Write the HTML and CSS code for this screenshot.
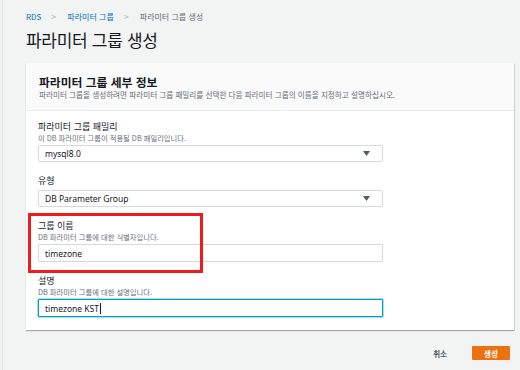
FILE: index.html
```html
<!DOCTYPE html>
<html lang="ko">
<head>
<meta charset="utf-8">
<link rel="stylesheet" href="styles.css">
</head>
<body>
<div class="page">
  <nav class="crumbs">
    <span class="crumb-link">RDS</span>
    <span class="sep">&gt;</span>
    <span class="crumb-link">파라미터 그룹</span>
    <span class="sep">&gt;</span>
    <span class="crumb-current">파라미터 그룹 생성</span>
  </nav>
  <h1 class="title">파라미터 그룹 생성</h1>

  <section class="card">
    <header class="card-head">
      <h2 class="card-title">파라미터 그룹 세부 정보</h2>
      <p class="card-sub">파라미터 그룹을 생성하려면 파라미터 그룹 패밀리를 선택한 다음 파라미터 그룹의 이름을 지정하고 설명하십시오.</p>
    </header>
    <div class="card-body">
      <div class="field">
        <div class="label">파라미터 그룹 패밀리</div>
        <div class="desc">이 DB 파라미터 그룹이 적용될 DB 패밀리입니다.</div>
        <div class="control select">
          <span>mysql8.0</span>
          <svg class="caret" width="7" height="5" viewBox="0 0 7 5"><path d="M0 0h7L3.5 5z" fill="#545b64"/></svg>
        </div>
      </div>
      <div class="field">
        <div class="label">유형</div>
        <div class="control select nodesc">
          <span>DB Parameter Group</span>
          <svg class="caret" width="7" height="5" viewBox="0 0 7 5"><path d="M0 0h7L3.5 5z" fill="#545b64"/></svg>
        </div>
      </div>
      <div class="field marked">
        <div class="label">그룹 이름</div>
        <div class="desc">DB 파라미터 그룹에 대한 식별자입니다.</div>
        <div class="control input">timezone</div>
        <div class="highlight"></div>
      </div>
      <div class="field">
        <div class="label">설명</div>
        <div class="desc">DB 파라미터 그룹에 대한 설명입니다.</div>
        <div class="control input focus">timezone KST<span class="cursor"></span></div>
      </div>
    </div>
  </section>

  <div class="actions">
    <span class="cancel">취소</span>
    <span class="create">생성</span>
  </div>
</div>
</body>
</html>
```

FILE: styles.css
```css
html, body {
  margin: 0;
  padding: 0;
  background: #f2f3f3;
  height: 100%;
}
body {
  font-family: "Noto Sans", "Noto Sans CJK KR", sans-serif;
  color: #16191f;
}
.page {
  margin-left: 2px;
  border-left: 1px solid #e2e4e4;
  min-height: 370px;
  box-sizing: border-box;
  padding: 11px 6px 0 23px;
}
.crumbs {
  display: flex;
  align-items: center;
  height: 12px;
  font-size: 8px;
  line-height: 12px;
  font-family: "Noto Sans CJK KR", sans-serif;
}
.crumb-link { color: #0073bb; }
.crumb-current { color: #687078; }
.sep {
  color: #aab7b8;
  margin: 0 11px 0 10px;
  font-size: 9px;
}
.title {
  margin: 5px 0 0;
  font-size: 17px;
  line-height: 24px;
  font-weight: 400;
  letter-spacing: -0.3px;
  font-family: "Noto Sans CJK KR", sans-serif;
  color: #16191f;
}
.card {
  margin-top: 11px;
  width: 488px;
  background: #fff;
  box-shadow: 0 1px 1px 0 rgba(0, 28, 36, 0.25), 1px 1px 1px 0 rgba(0, 28, 36, 0.1);
}
.card-head {
  height: 48px;
  box-sizing: border-box;
  background: #fafafa;
  border-bottom: 1px solid #eaeded;
  padding: 11px 13px 0;
}
.card-title {
  margin: 0;
  font-size: 11.8px;
  line-height: 15px;
  font-weight: 700;
  font-family: "Noto Sans CJK KR", sans-serif;
  color: #16191f;
}
.card-sub {
  margin: 0;
  font-size: 7.6px;
  line-height: 11px;
  color: #687078;
  font-family: "Noto Sans CJK KR", sans-serif;
}
.card-body {
  padding: 10px 12px 13px;
  display: flex;
  flex-direction: column;
  gap: 13px;
}
.field {
  display: flex;
  flex-direction: column;
}
.marked { position: relative; }
.label {
  font-size: 9px;
  line-height: 11px;
  font-weight: 400;
  font-family: "Noto Sans CJK KR", sans-serif;
  color: #16191f;
}
.desc {
  margin-top: 1px;
  font-size: 7.3px;
  line-height: 10px;
  color: #687078;
  font-family: "Noto Sans CJK KR", sans-serif;
}
.control {
  margin-top: 2px;
  width: 345px;
  height: 17px;
  box-sizing: border-box;
  border: 1px solid #d5dbdb;
  border-radius: 1px;
  display: flex;
  align-items: center;
  padding: 0 12px 0 6px;
  font-size: 8.5px;
  color: #16191f;
  background: #fff;
}
.nodesc { margin-top: 4px; }
.input { height: 18px; }
.select { justify-content: space-between; }
.caret { display: block; }
.focus {
  border: 1px solid #00a1c9;
  box-shadow: 0 0 0 1px rgba(0, 161, 201, 0.35);
}
.cursor {
  display: inline-block;
  width: 1px;
  height: 11px;
  background: #16191f;
  margin-left: 1px;
}
.highlight {
  position: absolute;
  left: -10px;
  top: -7px;
  width: 175px;
  height: 60px;
  box-sizing: border-box;
  border: 3px solid #f21a1a;
}
.actions {
  width: 488px;
  margin-top: 16px;
  display: flex;
  justify-content: flex-end;
  align-items: center;
  font-family: "Noto Sans CJK KR", sans-serif;
}
.cancel {
  font-size: 7.5px;
  color: #545b64;
  font-weight: 700;
  margin-right: 25px;
}
.create {
  width: 38px;
  height: 14px;
  background: #ec7211;
  color: #fff;
  font-size: 7.5px;
  font-weight: 700;
  display: flex;
  align-items: center;
  justify-content: center;
  border-radius: 1px;
  margin-right: 4px;
}
```
